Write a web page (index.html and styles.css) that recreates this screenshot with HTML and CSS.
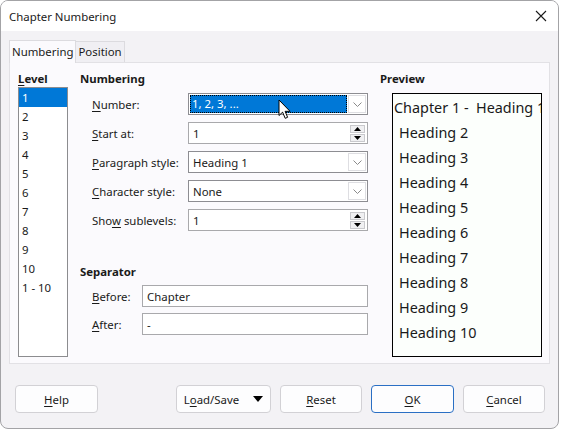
FILE: index.html
```html
<!DOCTYPE html>
<html lang="en">
<head>
<meta charset="utf-8">
<title>Chapter Numbering</title>
<link rel="stylesheet" href="styles.css">
</head>
<body>
<div class="window">
  <div class="titlebar">
    <span class="title">Chapter Numbering</span>
    <span class="close">
      <svg width="12" height="12" viewBox="0 0 12 12"><path d="M1 1L11 11M11 1L1 11" stroke="#1a1a1a" stroke-width="1.1" fill="none"/></svg>
    </span>
  </div>

  <div class="tabs">
    <div class="tab active">Numbering</div>
    <div class="tab">Position</div>
  </div>

  <div class="panel">
    <div class="col-level">
      <div class="heading"><u>L</u>evel</div>
      <ul class="levels">
        <li class="sel">1</li>
        <li>2</li>
        <li>3</li>
        <li>4</li>
        <li>5</li>
        <li>6</li>
        <li>7</li>
        <li>8</li>
        <li>9</li>
        <li>10</li>
        <li>1 - 10</li>
      </ul>
    </div>

    <div class="col-numbering">
      <div class="heading">Numbering</div>
      <div class="form">
        <label><u>N</u>umber:</label>
        <div class="combo focus">
          <span class="value">1, 2, 3, ...</span>
          <span class="drop"><svg width="9" height="5" viewBox="0 0 9 5"><path d="M0.5 0.5L4.5 4.5L8.5 0.5" stroke="#8a8a8a" fill="none"/></svg></span>
          <svg class="cursor" width="14" height="21" viewBox="0 0 14 21"><path d="M1 1V16.5L4.6 13.2L7.2 19.3L9.6 18.3L7.1 12.3H12L1 1Z" fill="#fff" stroke="#000" stroke-width="1"/></svg>
        </div>

        <label><u>S</u>tart at:</label>
        <div class="spin">
          <span class="value">1</span>
          <span class="arrows">
            <span class="up"><svg width="7" height="4" viewBox="0 0 7 4"><path d="M0 4L3.5 0L7 4Z" fill="#000"/></svg></span>
            <span class="down"><svg width="7" height="4" viewBox="0 0 7 4"><path d="M0 0L3.5 4L7 0Z" fill="#000"/></svg></span>
          </span>
        </div>

        <label><u>P</u>aragraph style:</label>
        <div class="combo">
          <span class="value">Heading 1</span>
          <span class="drop"><svg width="9" height="5" viewBox="0 0 9 5"><path d="M0.5 0.5L4.5 4.5L8.5 0.5" stroke="#8a8a8a" fill="none"/></svg></span>
        </div>

        <label><u>C</u>haracter style:</label>
        <div class="combo">
          <span class="value">None</span>
          <span class="drop"><svg width="9" height="5" viewBox="0 0 9 5"><path d="M0.5 0.5L4.5 4.5L8.5 0.5" stroke="#8a8a8a" fill="none"/></svg></span>
        </div>

        <label>Sho<u>w</u> sublevels:</label>
        <div class="spin">
          <span class="value">1</span>
          <span class="arrows">
            <span class="up"><svg width="7" height="4" viewBox="0 0 7 4"><path d="M0 4L3.5 0L7 4Z" fill="#000"/></svg></span>
            <span class="down"><svg width="7" height="4" viewBox="0 0 7 4"><path d="M0 0L3.5 4L7 0Z" fill="#000"/></svg></span>
          </span>
        </div>
      </div>

      <div class="heading sep-heading">Separator</div>
      <div class="form sep">
        <label><u>B</u>efore:</label>
        <div class="field">Chapter</div>
        <label><u>A</u>fter:</label>
        <div class="field">-</div>
      </div>
    </div>

    <div class="col-preview">
      <div class="heading">Preview</div>
      <div class="preview">
        <div class="line first">Chapter 1 -&nbsp;&nbsp;Heading 1</div>
        <div class="line">Heading 2</div>
        <div class="line">Heading 3</div>
        <div class="line">Heading 4</div>
        <div class="line">Heading 5</div>
        <div class="line">Heading 6</div>
        <div class="line">Heading 7</div>
        <div class="line">Heading 8</div>
        <div class="line">Heading 9</div>
        <div class="line">Heading 10</div>
      </div>
    </div>
  </div>

  <div class="buttons">
    <button class="btn help"><span><u>H</u>elp</span></button>
    <button class="btn loadsave"><span>L<u>o</u>ad/Save</span><svg class="caret" width="10" height="6" viewBox="0 0 10 6"><path d="M0 0H10L5 6Z" fill="#000"/></svg></button>
    <button class="btn reset"><span><u>R</u>eset</span></button>
    <button class="btn ok"><span><u>O</u>K</span></button>
    <button class="btn cancel"><span><u>C</u>ancel</span></button>
  </div>
</div>
</body>
</html>
```

FILE: styles.css
```css
* { box-sizing: border-box; }

html, body {
  margin: 0;
  padding: 0;
  background: #ffffff;
}

body {
  font-family: "Noto Sans", "Open Sans", sans-serif;
  font-size: 11.4px;
  color: #1a1a1a;
}

u { text-decoration-thickness: 1px; text-underline-offset: 2px; }

.window {
  width: 559px;
  height: 429px;
  border: 1px solid #a3a3a6;
  border-radius: 8px;
  background: #f3f2f5;
  overflow: hidden;
  display: flex;
  flex-direction: column;
}

.titlebar {
  height: 30px;
  background: #ffffff;
  display: flex;
  align-items: center;
  justify-content: space-between;
  padding: 0 11px 0 8px;
  flex: none;
}

.close { display: flex; }

.tabs {
  display: flex;
  align-items: flex-end;
  padding-left: 8px;
  margin-top: 9px;
  height: 22px;
  flex: none;
}

.tab {
  height: 21px;
  padding: 0 2px;
  border: 1px solid #dcdbdf;
  border-bottom: none;
  background: #f0eff3;
  line-height: 20px;
}

.tab.active {
  height: 23px;
  margin-bottom: -1px;
  background: #fbfafd;
  padding: 0 2px;
  position: relative;
  z-index: 1;
  line-height: 22px;
}

.tab + .tab { border-left: none; }

.panel {
  margin: 0 8px 0 8px;
  height: 302px;
  border: 1px solid #e2e1e5;
  background: #fbfafd;
  display: flex;
  padding: 7px 4px 7px 8px;
  flex: none;
}

.panel > div { flex: none; }

.heading {
  font-weight: bold;
  height: 17px;
  line-height: 17px;
}

.col-level { width: 50px; }

.levels {
  list-style: none;
  margin: 0;
  padding: 0;
  height: 270px;
  border: 1px solid #8c8c8f;
  background: #ffffff;
}

.levels li {
  height: 19px;
  line-height: 19px;
  padding-left: 3px;
}

.levels li.sel {
  background: #0078d7;
  color: #ffffff;
}

.col-numbering {
  width: 288px;
  margin-left: 12px;
}

.form {
  display: grid;
  grid-template-columns: 96px 180px;
  grid-auto-rows: 22px;
  row-gap: 7px;
  margin-top: 6px;
  padding-left: 12px;
  align-items: center;
}

.form.sep {
  grid-template-columns: 50px 226px;
  row-gap: 6px;
  margin-top: 5px;
}

.sep-heading { margin-top: 32px; }

.combo, .spin, .field {
  height: 22px;
  background: #ffffff;
  border: 1px solid #a9a9ac;
  display: flex;
  align-items: center;
  position: relative;
}

.combo { border-color: #8d8d92; }

.value, .field { padding-left: 4px; flex: 1; }

.combo.focus .value {
  align-self: stretch;
  background: #0078d7;
  color: #ffffff;
  line-height: 18px;
  margin: 1px 0 1px 1px;
  padding-left: 2px;
  outline: 1px dotted #000;
  outline-offset: -1px;
}

.drop {
  width: 18px;
  align-self: stretch;
  margin: 1px;
  border: 1px solid #dedee2;
  background: #ffffff;
  display: flex;
  align-items: center;
  justify-content: center;
}

.cursor {
  position: absolute;
  left: 89px;
  top: 5px;
}

.arrows {
  width: 15px;
  margin-right: 2px;
  display: flex;
  flex-direction: column;
  gap: 1px;
}

.arrows span {
  height: 8px;
  border: 1px solid #c9c9cd;
  background: #f0f0f2;
  display: flex;
  align-items: center;
  justify-content: center;
}

.col-preview {
  margin-left: 12px;
  width: 162px;
}

.preview {
  margin: 6px 0 0 12px;
  width: 150px;
  height: 264px;
  border: 1px solid #000000;
  background: #fcfffc;
  overflow: hidden;
  font-size: 14.4px;
  padding-top: 1px;
}

.line {
  height: 25px;
  line-height: 25px;
  white-space: nowrap;
  padding-left: 6px;
}

.line.first { padding-left: 1px; }

.buttons {
  display: flex;
  margin-top: 21px;
  padding-left: 14px;
  height: 28px;
}

.btn {
  height: 28px;
  border: 1px solid #d2d1d5;
  border-radius: 4px;
  background: #fdfdfe;
  font-family: inherit;
  font-size: 11.4px;
  color: #1a1a1a;
  padding: 0;
  display: flex;
  align-items: center;
  justify-content: center;
}

.caret { margin-left: 14px; }

.help { width: 83px; }
.loadsave { width: 95px; margin-left: 78px; }
.reset { width: 82px; margin-left: 9px; }
.ok { width: 83px; margin-left: 9px; border-color: #2a6fc4; }
.cancel { width: 82px; margin-left: 9px; }
```
